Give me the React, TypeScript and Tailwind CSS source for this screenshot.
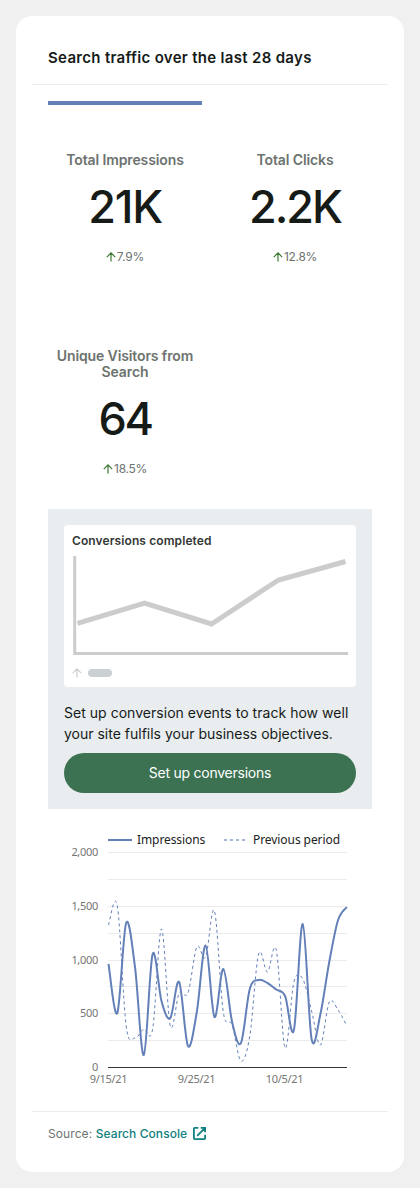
import React from 'react';

const impressions = [964, 1013, 923, 967, 1055, 954, 1001, 1018, 982, 1046, 1012, 945.5, 1017, 969, 1022, 1043, 989, 980, 983, 989.5, 996, 1030, 924, 1039, 1014, 962, 920, 907];
const previous = [925, 906, 1026, 1038, 1029, 1029, 929, 1026, 993, 993, 947, 957, 911, 1012, 1025, 1061, 1036, 954, 972, 950, 1048, 982, 979, 1011, 1045, 1002, 1010, 1026];

function smooth(ys: number[]) {
  const pts = ys.map((y, i) => [60.5 + i * 8.83, y - 820]);
  let d = `M${pts[0][0]} ${pts[0][1]}`;
  const k = 1 / 6;
  for (let i = 0; i < pts.length - 1; i++) {
    const a = pts[Math.max(0, i - 1)];
    const b = pts[i];
    const c = pts[i + 1];
    const e = pts[Math.min(pts.length - 1, i + 2)];
    d += ` C${b[0] + (c[0] - a[0]) * k} ${b[1] + (c[1] - a[1]) * k} ${c[0] - (e[0] - b[0]) * k} ${c[1] - (e[1] - b[1]) * k} ${c[0]} ${c[1]}`;
  }
  return d;
}

function UpArrow({ className }: { className: string }) {
  return (
    <svg className={className} viewBox="0 0 10 10" fill="none" stroke="currentColor" strokeWidth="1.2">
      <path d="M5 9.5V1M.8 5.1 5 .9l4.2 4.2" />
    </svg>
  );
}

function Metric({ title, value, change, valueTracking, changeTracking }: {
  title: React.ReactNode;
  value: string;
  change: string;
  valueTracking: string;
  changeTracking: string;
}) {
  return (
    <div className="pt-[47px]">
      <h3 className="text-[14px] leading-4 font-semibold tracking-[-0.12px] whitespace-nowrap text-[#6c726e]">{title}</h3>
      <p className={`mt-[13px] h-[52px] text-[45px] leading-[52px] font-medium text-[#161b18] ${valueTracking}`}>{value}</p>
      <div className="mt-4 flex h-4 items-center justify-center gap-px text-[12px] leading-4 text-[#6c726e]">
        <UpArrow className="h-[10px] w-[10px] text-[#3d7a33]" />
        <span className={changeTracking}>{change}</span>
      </div>
    </div>
  );
}

const gridLines = [32.5, 59.5, 86.5, 113.5, 140.5, 166.5, 193.5, 220.5];
const yLabels: [string, number][] = [['2,000', 36], ['1,500', 90], ['1,000', 144], ['500', 197], ['0', 251]];
const xLabels: [string, number][] = [['9/15/21', 60.5], ['9/25/21', 148.5], ['10/5/21', 236.5]];

function TrafficChart() {
  return (
    <svg className="block h-[270px] w-[324px] font-['Noto_Sans',sans-serif]" viewBox="0 0 324 270">
      {gridLines.map((y) => (
        <path key={y} d={`M60 ${y}H299`} stroke="#ebebeb" />
      ))}
      <path d="M60 20H84" stroke="#6380b8" strokeWidth="2" />
      <text x="89" y="24" fontSize="12" letterSpacing="-0.09" fill="#222222">Impressions</text>
      <path d="M176 20H198" stroke="#a5b6d6" strokeWidth="2" strokeDasharray="3 3" />
      <text x="205" y="24" fontSize="12" letterSpacing="-0.07" fill="#222222">Previous period</text>
      <path d="M60 247.5H299" stroke="#333333" />
      <path d={smooth(previous)} fill="none" stroke="#6380b8" strokeWidth="1" strokeDasharray="3 3" />
      <path d={smooth(impressions)} fill="none" stroke="#6380b8" strokeWidth="2" />
      {yLabels.map(([t, y]) => (
        <text key={t} x="50" y={y} fontSize="11" letterSpacing="-0.3" textAnchor="end" fill="#757575">{t}</text>
      ))}
      {xLabels.map(([t, x]) => (
        <text key={t} x={x} y="263" fontSize="11" letterSpacing="-0.3" textAnchor="middle" fill="#757575">{t}</text>
      ))}
    </svg>
  );
}

export default function App() {
  return (
    <main className="h-[1188px] w-[420px] bg-[#f0f0f0] p-4 font-['Inter','Liberation_Sans',sans-serif]">
      <section className="flex h-[1156px] flex-col rounded-2xl bg-white px-4">
        <header className="h-[69px] border-b border-[#ebeef0] px-4 pt-[30px]">
          <h2 className="whitespace-nowrap text-[15px] leading-6 font-semibold tracking-[0.31px] text-[#161b18]">Search traffic over the last 28 days</h2>
        </header>
        <div className="flex flex-col px-4 pt-4">
          <div className="h-1 w-[154px] bg-[#6380b8]" />
          <div className="grid h-[404px] grid-cols-2 grid-rows-[196px_208px] gap-x-4 text-center">
            <Metric title="Total Impressions" value="21K" change="7.9%" valueTracking="tracking-[-1.2px]" changeTracking="tracking-[-0.1px]" />
            <Metric title="Total Clicks" value="2.2K" change="12.8%" valueTracking="tracking-[-2px]" changeTracking="tracking-[-0.35px]" />
            <Metric title={<>Unique Visitors from<br />Search</>} value="64" change="18.5%" valueTracking="tracking-[-2.5px]" changeTracking="tracking-[-0.3px]" />
          </div>
          <div className="flex h-[300px] flex-col bg-[#e9edf0] p-4">
            <div className="h-[162px] rounded bg-white px-2 pt-2">
              <h4 className="text-[12px] leading-4 font-semibold tracking-[0.1px] text-[#333836]">Conversions completed</h4>
              <svg className="mt-[6px] block h-[101px] w-[276px]" viewBox="0 0 276 101" fill="none" stroke="#cccccc">
                <path d="M2.7 1V98.5H276" strokeWidth="3" />
                <path d="M5.5 68.3 72.5 48 139.5 69 206.5 25 273.5 6.5" strokeWidth="5" />
              </svg>
              <div className="mt-[12px] flex items-center gap-[6px]">
                <UpArrow className="h-[10px] w-[10px] text-[#cccccc]" />
                <span className="h-2 w-6 rounded bg-[#cbd0d3]" />
              </div>
            </div>
            <p className="mt-[15px] whitespace-nowrap text-[14px] leading-[21px] text-[#161b18]">
              <span className="block tracking-[0.03px]">Set up conversion events to track how well</span>
              <span className="block">your site fulfils your business objectives.</span>
            </p>
            <button className="mt-[9px] h-10 shrink-0 rounded-full bg-[#3c7251] text-[14px] leading-5 tracking-[-0.25px] text-white">Set up conversions</button>
          </div>
          <div className="mt-[11px]"><TrafficChart /></div>
        </div>
        <footer className="mt-[21px] flex h-[44px] items-center border-t border-[#ebeef0] px-4 text-[12px] leading-4 whitespace-nowrap">
          <span className="tracking-[0.08px] text-[#6c726e]">Source:</span>
          <a className="ml-[3.5px] flex items-center gap-[6px] font-medium text-[#108080]">
            <span className="tracking-[0.07px]">Search Console</span>
            <svg className="h-[13px] w-[13px]" viewBox="0 0 13 13" fill="none" stroke="currentColor" strokeWidth="1.8">
              <path d="M5.3.9H1.7Q.9.9.9 1.7V11.3Q.9 12.1 1.7 12.1H11.3Q12.1 12.1 12.1 11.3V7.7M7.7.9H12.1V5.3M11.8 1.2 4.2 8.8" />
            </svg>
          </a>
        </footer>
      </section>
    </main>
  );
}
